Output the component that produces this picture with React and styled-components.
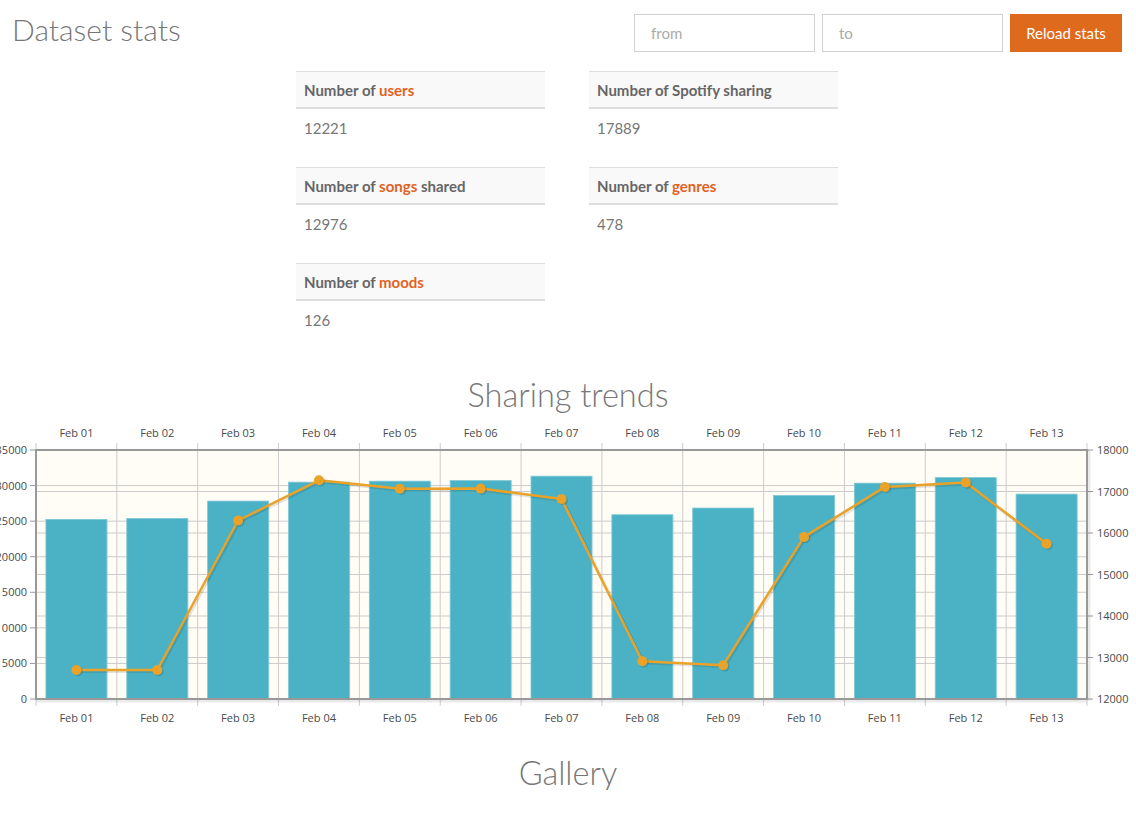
import React from "react";
import styled, { createGlobalStyle } from "styled-components";

const GlobalStyle = createGlobalStyle`
  html, body { margin: 0; padding: 0; background: #fff; overflow: hidden; }
  body { font-family: Lato, "Open Sans", sans-serif; color: #777; }
  * { box-sizing: border-box; }
`;

const Page = styled.div`
  width: 1136px;
  display: flex;
  flex-direction: column;
`;

const Header = styled.div`
  display: flex;
  align-items: flex-start;
  justify-content: space-between;
  padding: 13px 14px 0 12px;
`;

const Title = styled.h1`
  margin: 0;
  font-family: Lato, sans-serif;
  font-weight: 300;
  font-size: 30px;
  line-height: 32px;
  color: #777;
`;

const SectionTitle = styled.h2`
  margin: ${(p) => p.$mt}px 0 0;
  font-family: Lato, sans-serif;
  font-weight: 300;
  font-size: 32.5px;
  line-height: 35px;
  color: #777;
  text-align: center;
`;

const Controls = styled.div`
  display: flex;
  gap: 7px;
  margin-top: 1px;
`;

const DateInput = styled.input`
  width: 181px;
  height: 38px;
  border: 1px solid #d0d0d0;
  padding: 0 16px;
  font-family: Lato, sans-serif;
  font-size: 15px;
  color: #555;
  outline: none;
  &::placeholder { color: #aaa; }
`;

const ReloadButton = styled.button`
  height: 38px;
  width: 112px;
  border: none;
  background: #de6a1e;
  color: #fff;
  font-family: Lato, sans-serif;
  font-size: 15px;
  padding: 0;
  cursor: pointer;
`;

const StatsGrid = styled.div`
  display: grid;
  grid-template-columns: 249px 249px;
  column-gap: 44px;
  justify-content: center;
  margin-top: 19px;
  padding-right: 2px;
`;

const StatTable = styled.div`
  margin-bottom: 20px;
`;

const StatHead = styled.div`
  background: #f9f9f9;
  border-top: 1px solid #dedede;
  border-bottom: 2px solid #dedede;
  padding: 8px 8px;
  height: 38px;
  font-family: Lato, sans-serif;
  font-weight: 700;
  font-size: 15px;
  line-height: 20px;
  color: #666;
`;

const Accent = styled.span`
  color: #e2621f;
`;

const StatValue = styled.div`
  padding: 8px 8px;
  height: 38px;
  font-family: Lato, sans-serif;
  font-size: 15px;
  line-height: 22px;
  color: #777;
`;

const ChartSvg = styled.svg`
  display: block;
  width: 1136px;
  height: 323px;
  overflow: hidden;
`;

const stats = [
  { pre: "Number of ", accent: "users", post: "", value: "12221" },
  { pre: "Number of Spotify sharing", accent: "", post: "", value: "17889" },
  { pre: "Number of ", accent: "songs", post: " shared", value: "12976" },
  { pre: "Number of ", accent: "genres", post: "", value: "478" },
  { pre: "Number of ", accent: "moods", post: "", value: "126" },
];

const labels = ["Feb 01","Feb 02","Feb 03","Feb 04","Feb 05","Feb 06","Feb 07","Feb 08","Feb 09","Feb 10","Feb 11","Feb 12","Feb 13"];
const bars = [25250, 25380, 27820, 30480, 30620, 30700, 31320, 25900, 26840, 28600, 30340, 31120, 28800];
const line = [12700, 12700, 16300, 17270, 17065, 17070, 16820, 12910, 12815, 15905, 17110, 17215, 15740];

const L = 36, R = 1087, T = 450, B = 699;
const CW = (R - L) / 13;
const yL = (v) => B - (v / 35000) * (B - T);
const yR = (v) => B - ((v - 12000) / 6000) * (B - T);
const cx = (i) => L + CW * (i + 0.5);

const tickFont = { fontFamily: "'Open Sans', sans-serif", fontSize: 11, fill: "#4a4a4a" };

function Chart() {
  const leftTicks = [0, 5000, 10000, 15000, 20000, 25000, 30000, 35000];
  const rightTicks = [12000, 13000, 14000, 15000, 16000, 17000, 18000];
  const pts = line.map((v, i) => [cx(i), yR(v)]);
  const path = pts.map((p, i) => `${i ? "L" : "M"}${p[0].toFixed(1)},${p[1].toFixed(1)}`).join(" ");
  const shadowPath = pts.map((p, i) => `${i ? "L" : "M"}${(p[0] + 1.5).toFixed(1)},${(p[1] + 1.5).toFixed(1)}`).join(" ");
  return (
    <ChartSvg viewBox="0 412 1136 323">
      <rect x={L} y={T} width={R - L} height={B - T} fill="#fffdf6" />
      {Array.from({ length: 12 }, (_, k) => (
        <line key={"vg" + k} x1={L + CW * (k + 1)} x2={L + CW * (k + 1)} y1={T} y2={B} stroke="#cccccc" strokeWidth="1" />
      ))}
      {leftTicks.slice(1, -1).map((v) => (
        <line key={"hl" + v} x1={L} x2={R} y1={yL(v)} y2={yL(v)} stroke="#cccccc" strokeWidth="1" />
      ))}
      {rightTicks.slice(1, -1).map((v) => (
        <line key={"hr" + v} x1={L} x2={R} y1={yR(v)} y2={yR(v)} stroke="#cccccc" strokeWidth="1" />
      ))}
      {Array.from({ length: 14 }, (_, k) => (
        <g key={"vt" + k}>
          <line x1={L + CW * k} x2={L + CW * k} y1={T - 7} y2={T} stroke="#cccccc" strokeWidth="1" />
          <line x1={L + CW * k} x2={L + CW * k} y1={B} y2={B + 7} stroke="#cccccc" strokeWidth="1" />
        </g>
      ))}
      {leftTicks.map((v) => (
        <g key={"lt" + v}>
          <line x1={L - 6} x2={L} y1={yL(v)} y2={yL(v)} stroke="#999" strokeWidth="1" />
          <text x={27} y={yL(v) + 4} textAnchor="end" style={tickFont}>{v}</text>
        </g>
      ))}
      {rightTicks.map((v) => (
        <g key={"rt" + v}>
          <line x1={R} x2={R + 6} y1={yR(v)} y2={yR(v)} stroke="#999" strokeWidth="1" />
          <text x={1097} y={yR(v) + 4} textAnchor="start" style={tickFont}>{v}</text>
        </g>
      ))}
      {labels.map((l, i) => (
        <g key={l}>
          <text x={cx(i)} y={437} textAnchor="middle" style={tickFont}>{l}</text>
          <text x={cx(i)} y={722} textAnchor="middle" style={tickFont}>{l}</text>
        </g>
      ))}
      {bars.map((v, i) => (
        <g key={"b" + i}>
          <rect x={cx(i) - 30.5 + 1.5} y={yL(v) + 1.5} width={61} height={B - yL(v)} fill="rgba(0,0,0,0.05)" />
          <rect x={cx(i) - 30.5} y={yL(v)} width={61} height={B - yL(v)} fill="#4bb2c5" stroke="#7fc8d5" strokeWidth="0.8" />
        </g>
      ))}
      <line x1={L} x2={R} y1={B + 2} y2={B + 2} stroke="rgba(0,0,0,0.08)" strokeWidth="3" />
      <line x1={R + 2} x2={R + 2} y1={T} y2={B + 2} stroke="rgba(0,0,0,0.08)" strokeWidth="3" />
      <rect x={L} y={T} width={R - L} height={B - T} fill="none" stroke="#999" strokeWidth="2" />
      <path d={shadowPath} fill="none" stroke="rgba(0,0,0,0.1)" strokeWidth="3" />
      <path d={path} fill="none" stroke="#eaa228" strokeWidth="2.5" strokeLinejoin="round" />
      {pts.map((p, i) => (
        <g key={"p" + i}>
          <circle cx={p[0] + 1.5} cy={p[1] + 1.5} r="5" fill="rgba(0,0,0,0.12)" />
          <circle cx={p[0]} cy={p[1]} r="5" fill="#eaa228" />
        </g>
      ))}
    </ChartSvg>
  );
}

export default function App() {
  return (
    <>
      <GlobalStyle />
      <Page>
        <Header>
          <Title>Dataset stats</Title>
          <Controls>
            <DateInput placeholder="from" />
            <DateInput placeholder="to" />
            <ReloadButton>Reload stats</ReloadButton>
          </Controls>
        </Header>
        <StatsGrid>
          {stats.map((s) => (
            <StatTable key={s.value}>
              <StatHead>
                {s.pre}
                {s.accent && <Accent>{s.accent}</Accent>}
                {s.post}
              </StatHead>
              <StatValue>{s.value}</StatValue>
            </StatTable>
          ))}
        </StatsGrid>
        <SectionTitle $mt={18}>Sharing trends</SectionTitle>
        <Chart />
        <SectionTitle $mt={20}>Gallery</SectionTitle>
      </Page>
    </>
  );
}
